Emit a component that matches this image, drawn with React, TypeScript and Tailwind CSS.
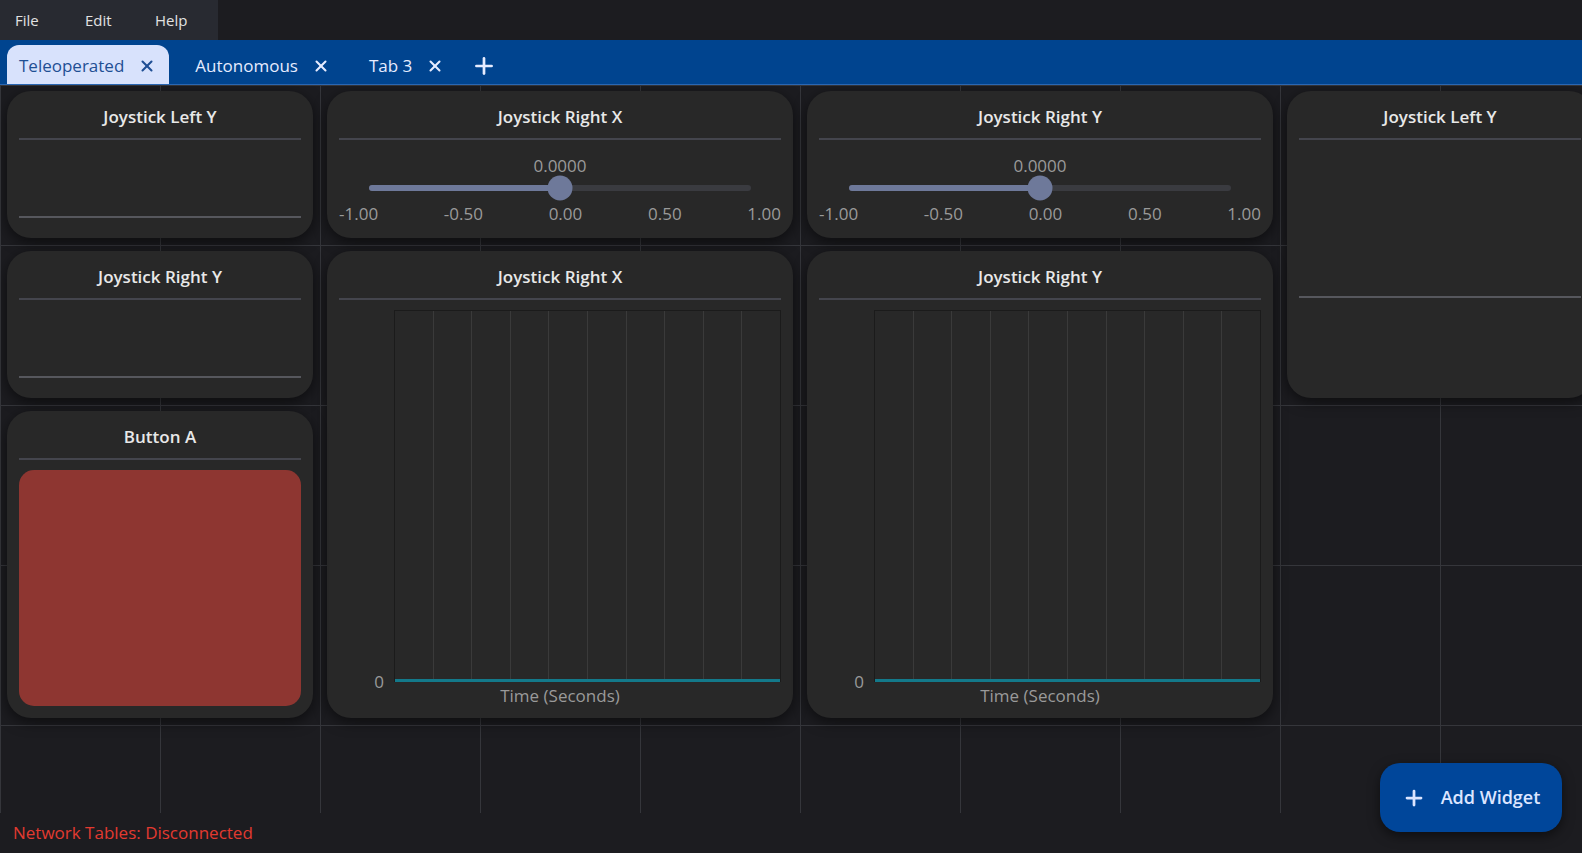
import React from 'react';
import { X, Plus } from 'lucide-react';

const font = { fontFamily: '"Open Sans", "Noto Sans", sans-serif' };

const WidgetFrame: React.FC<{ title: string; className: string; children?: React.ReactNode }> = ({ title, className, children }) => (
  <div className={`mx-[7px] mt-[6px] mb-[7px] flex flex-col rounded-[24px] bg-[#282828] px-3 shadow-[0_4px_14px_rgba(0,0,0,0.55)] ${className}`}>
    <div className="border-b-2 border-[#44454d] pt-[14px] pb-[9px] text-center text-[17px] font-semibold leading-6 text-[#e8e8e8]">
      {title}
    </div>
    <div className="flex min-h-0 flex-1 flex-col">{children}</div>
  </div>
);

const TextDisplay: React.FC<{ title: string; className: string }> = ({ title, className }) => (
  <WidgetFrame title={title} className={className}>
    <div className="flex flex-1 items-center">
      <div className="h-[58px] w-full border-b-2 border-[#56575d]" />
    </div>
  </WidgetFrame>
);

const SliderWidget: React.FC<{ title: string; className: string }> = ({ title, className }) => (
  <WidgetFrame title={title} className={className}>
    <div className="pt-[14px] text-center text-[17px] leading-6 text-[#9a9a9a]">0.0000</div>
    <div className="relative mx-[30px] mt-[7px] h-[6px] rounded-full bg-[#3a3b40]">
      <div className="h-full w-1/2 rounded-full bg-[#6e799a]" />
      <div className="absolute left-1/2 top-1/2 h-[25px] w-[25px] -translate-x-1/2 -translate-y-1/2 rounded-full bg-[#6e799a]" />
    </div>
    <div className="mt-[11px] flex justify-between text-[17px] leading-6 text-[#9a9a9a]">
      <span>-1.00</span>
      <span>-0.50</span>
      <span>0.00</span>
      <span>0.50</span>
      <span>1.00</span>
    </div>
  </WidgetFrame>
);

const GraphWidget: React.FC<{ title: string; className: string }> = ({ title, className }) => (
  <WidgetFrame title={title} className={className}>
    <div className="flex flex-1 flex-col pt-[10px] pb-[10px]">
      <div className="flex flex-1">
        <div className="flex w-[55px] flex-col justify-end pr-[10px] text-right text-[17px] leading-6 text-[#9a9a9a]">
          <span className="translate-y-[12px]">0</span>
        </div>
        <div className="flex flex-1 flex-col border-l border-t border-r border-[#1b1b1b]">
          <div className="flex flex-1">
            {Array.from({ length: 10 }).map((_, i) => (
              <div key={i} className={`flex-1 ${i < 9 ? 'border-r border-[#3a3a3a]' : ''}`} />
            ))}
          </div>
          <div className="h-[3px] bg-[#13798a]" />
        </div>
      </div>
      <div className="mt-[2px] text-center text-[17px] leading-6 text-[#9a9a9a]">Time (Seconds)</div>
    </div>
  </WidgetFrame>
);

const tabs = ['Teleoperated', 'Autonomous', 'Tab 3'];

export default function App() {
  return (
    <div className="relative flex h-screen w-full flex-col overflow-hidden bg-[#1c1c20]" style={font}>
      {/* menu bar */}
      <div className="flex h-10 shrink-0">
        <div className="flex w-[218px] items-center bg-[#282a31] text-[15px] text-[#e2e2e2]">
          {['File', 'Edit', 'Help'].map((m) => (
            <span key={m} className="w-[70px] pl-[15px]">{m}</span>
          ))}
        </div>
      </div>

      {/* tab bar */}
      <div className="flex h-[45px] shrink-0 items-end gap-[14px] border-b border-[#2a67b3] bg-[#00448f] pl-[7px]">
        {tabs.map((t, i) => (
          <div
            key={t}
            className={`flex h-[39px] items-center gap-[14px] rounded-t-[12px] pl-3 pr-[13px] pt-[2px] text-[17px] ${
              i === 0 ? 'bg-[#d8e2fc] text-[#1f4f94]' : 'text-[#e6ecff]'
            }`}
          >
            <span>{t}</span>
            <X size={18} strokeWidth={2.75} />
          </div>
        ))}
        <div className="flex h-[39px] items-center pt-[2px] text-[#e6ecff]">
          <Plus size={26} strokeWidth={2.5} />
        </div>
      </div>

      {/* widget canvas */}
      <div className="relative min-h-0 flex-1 overflow-hidden bg-[linear-gradient(to_right,#35363b_1px,transparent_1px),linear-gradient(to_bottom,#35363b_1px,transparent_1px)] bg-[size:160px_160px] bg-[position:0_0]">
        <div className="grid grid-cols-[repeat(11,160px)] grid-rows-[repeat(5,160px)]">
          <TextDisplay title="Joystick Left Y" className="col-start-1 col-span-2 row-start-1" />
          <SliderWidget title="Joystick Right X" className="col-start-3 col-span-3 row-start-1" />
          <SliderWidget title="Joystick Right Y" className="col-start-6 col-span-3 row-start-1" />
          <TextDisplay title="Joystick Left Y" className="col-start-9 col-span-2 row-start-1 row-span-2" />
          <TextDisplay title="Joystick Right Y" className="col-start-1 col-span-2 row-start-2" />
          <GraphWidget title="Joystick Right X" className="col-start-3 col-span-3 row-start-2 row-span-3" />
          <GraphWidget title="Joystick Right Y" className="col-start-6 col-span-3 row-start-2 row-span-3" />
          <WidgetFrame title="Button A" className="col-start-1 col-span-2 row-start-3 row-span-2">
            <div className="flex-1 pt-[10px] pb-[12px]">
              <div className="h-full rounded-[15px] bg-[#8e3631]" />
            </div>
          </WidgetFrame>
        </div>
      </div>

      {/* status bar */}
      <div className="flex h-10 shrink-0 items-center pl-[13px] text-[17px] text-[#e23a30]">
        Network Tables: Disconnected
      </div>

      <button className="absolute bottom-[21px] right-[20px] flex h-[69px] w-[182px] items-center justify-center gap-[15px] rounded-[20px] bg-[#00469a] text-[18px] font-semibold text-[#dce5ff] shadow-[0_4px_12px_rgba(0,0,0,0.5)]">
        <Plus size={24} strokeWidth={2.75} />
        Add Widget
      </button>
    </div>
  );
}
